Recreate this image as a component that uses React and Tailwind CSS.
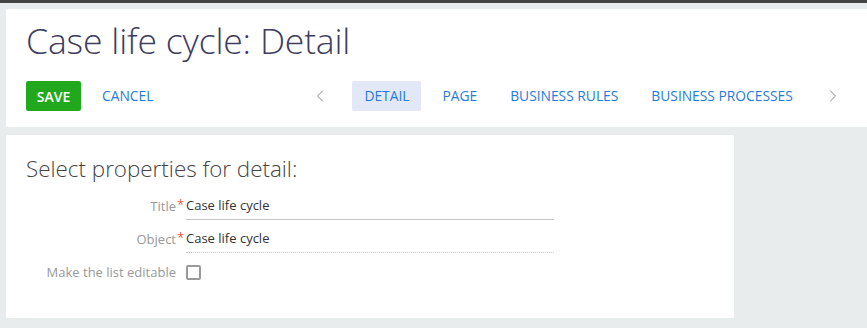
import { ChevronLeft, ChevronRight } from "lucide-react";

const tabs = ["DETAIL", "PAGE", "BUSINESS RULES", "BUSINESS PROCESSES"];

const FieldRow = ({ label, value, dotted }) => (
  <div className="flex items-center h-[33px]">
    <div className="w-[170px] shrink-0 text-right text-[13px] text-[#999]">{label}</div>
    <div className="w-[10px] shrink-0 self-start pt-[5px] pl-[1px] text-[13px] leading-[18px] text-[#f0584a]">*</div>
    <div
      className={
        "w-[368px] h-[26px] flex items-center text-[13px] text-[#333] border-b " +
        (dotted ? "border-dotted border-[#c8c8c8]" : "border-[#c4c4c4]")
      }
    >
      {value}
    </div>
  </div>
);

export default function App() {
  return (
    <div className="w-[867px] h-[328px] bg-[#e9eced] overflow-hidden font-['Open_Sans',sans-serif]">
      <div className="h-[3px] bg-[#444]" />
      <div className="pl-[6px] pt-[6px]">
        {/* header card */}
        <div className="bg-white h-[118px] rounded-l-[2px] pl-[20px]">
          <h1 className="pt-[11px] text-[35.6px] leading-[40px] font-light text-[#3e3d5e] tracking-[-0.2px]">
            Case life cycle: Detail
          </h1>
          <div className="flex items-center mt-[21px] h-[30px]">
            <button className="h-[30px] w-[55px] pt-[1px] rounded-[2px] bg-[#22a81d] text-white text-[14px] font-semibold">
              SAVE
            </button>
            <button className="ml-[21px] pt-[1px] text-[13.8px] text-[#1f7be0]">CANCEL</button>
            <ChevronLeft className="ml-[157px] w-[20px] h-[20px] text-[#888]" strokeWidth={1.2} />
            <div className="flex items-center gap-[9px] ml-[22px]">
              {tabs.map((t, i) => (
                <div
                  key={t}
                  className={
                    "h-[30px] px-[12px] pt-[1px] flex items-center rounded-[2px] text-[13.8px] text-[#1f7be0] " +
                    (i === 0 ? "bg-[#e2e8f8]" : "")
                  }
                >
                  {t}
                </div>
              ))}
            </div>
            <ChevronRight className="ml-[18px] w-[20px] h-[20px] text-[#888]" strokeWidth={1.2} />
          </div>
        </div>

        {/* properties card */}
        <div className="mt-[8px] w-[728px] h-[183px] bg-white rounded-[2px] pl-[20px]">
          <h2 className="pt-[19px] text-[22.4px] leading-[30px] font-light text-[#444]">
            Select properties for detail:
          </h2>
          <div className="mt-[6px] -ml-[20px]">
            <FieldRow label="Title" value="Case life cycle" />
            <FieldRow label="Object" value="Case life cycle" dotted />
            <div className="flex items-center h-[33px]">
              <div className="w-[170px] shrink-0 text-right text-[13px] text-[#999]">Make the list editable</div>
              <div className="ml-[10px] w-[15px] h-[15px] border-2 border-[#9a9a9a] rounded-[2px]" />
            </div>
          </div>
        </div>
      </div>
    </div>
  );
}
